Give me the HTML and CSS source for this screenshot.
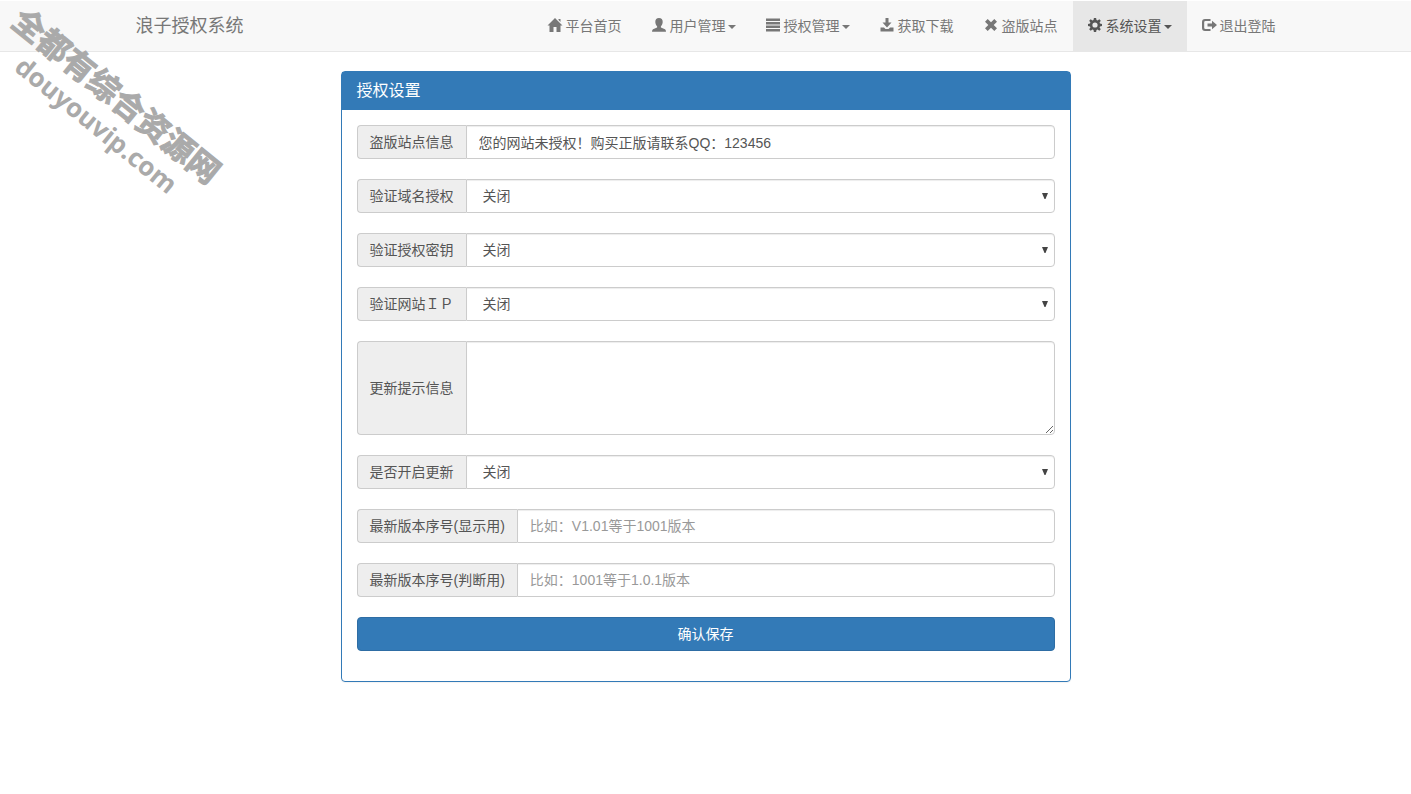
FILE: index.html
```html
<!DOCTYPE html>
<html lang="zh-CN">
<head>
<meta charset="utf-8">
<meta name="viewport" content="width=device-width, initial-scale=1">
<title>授权设置</title>
<link rel="stylesheet" href="styles.css">
</head>
<body>
<header class="navbar">
  <div class="container">
    <a class="brand" href="#">浪子授权系统</a>
    <nav class="nav">
      <a class="nav-link" href="#"><svg class="icon" viewBox="0 0 14 14"><path d="M7 0 14.500 7.500H12.500V14H8.500V9H5.500V14H1.500V7.500H-.5L7 0ZM10.500 1H12.500V4L10.500 2Z"/></svg><span>平台首页</span></a>
      <a class="nav-link" href="#"><svg class="icon" viewBox="0 0 14 14"><path d="M7 0C9.400 0 10.800 1.500 10.700 4C10.600 6 9.900 7.200 8.900 8.200V9.400L13 11.300Q14 12 14 13.700H0Q0 12 1 11.300L5.100 9.400V8.200C4.100 7.200 3.400 6 3.300 4C3.200 1.500 4.600 0 7 0Z"/></svg><span>用户管理<i class="caret"></i></span></a>
      <a class="nav-link" href="#"><svg class="icon" viewBox="0 0 14 14"><path d="M0 .5H14V3H0ZM0 4H14V6.500H0ZM0 7.500H14V10H0ZM0 11H14V13.500H0Z"/></svg><span>授权管理<i class="caret"></i></span></a>
      <a class="nav-link" href="#"><svg class="icon" viewBox="0 0 14 14"><path d="M5.500 0H8.500V4.500H11.500L7 9.500 2.500 4.500H5.500ZM.5 9.500H4L5.500 11H8.500L10 9.500H13.500V13.500H.5Z"/></svg><span>获取下载</span></a>
      <a class="nav-link" href="#"><svg class="icon" viewBox="0 0 14 14"><path d="M3.700 1 7 4.300 10.300 1 13 3.700 9.700 7 13 10.300 10.300 13 7 9.700 3.700 13 1 10.300 4.300 7 1 3.700Z"/></svg><span>盗版站点</span></a>
      <a class="nav-link active" href="#"><svg class="icon" viewBox="0 0 14 14"><path fill-rule="evenodd" d="M5.900 0H8.100L8.500 2 9.600 2.400 11.300 1.200 12.800 2.700 11.600 4.400 12 5.500 14 5.900V8.100L12 8.500 11.600 9.600 12.800 11.300 11.300 12.800 9.600 11.600 8.500 12 8.100 14H5.900L5.500 12 4.400 11.600 2.700 12.800 1.200 11.300 2.400 9.600 2 8.500 0 8.100V5.900L2 5.500 2.400 4.400 1.200 2.700 2.700 1.200 4.400 2.400 5.500 2ZM7 4.400A2.600 2.600 0 1 0 7 9.600A2.600 2.600 0 1 0 7 4.400Z"/></svg><span>系统设置<i class="caret"></i></span></a>
      <a class="nav-link" href="#"><svg class="icon" viewBox="0 0 14 14"><path d="M8.500 1H3Q0 1 0 4V10Q0 13 3 13H8.500V11H3.500Q2.200 11 2.200 9.700V4.300Q2.200 3 3.500 3H8.500ZM10 2.800 15 7 10 11.200V8.500H5.500V5.500H10Z"/></svg><span>退出登陆</span></a>
    </nav>
  </div>
</header>
<main class="container">
  <section class="panel">
    <h1 class="panel-heading">授权设置</h1>
    <form class="panel-body">
      <div class="input-group">
        <label class="addon" for="pirate">盗版站点信息</label>
        <input class="control" id="pirate" type="text" value="您的网站未授权！购买正版请联系QQ：123456">
      </div>
      <div class="input-group">
        <label class="addon" for="domain">验证域名授权</label>
        <select class="control" id="domain"><option>关闭</option><option>开启</option></select>
      </div>
      <div class="input-group">
        <label class="addon" for="key">验证授权密钥</label>
        <select class="control" id="key"><option>关闭</option><option>开启</option></select>
      </div>
      <div class="input-group">
        <label class="addon" for="ip">验证网站ＩＰ</label>
        <select class="control" id="ip"><option>关闭</option><option>开启</option></select>
      </div>
      <div class="input-group">
        <label class="addon" for="notice">更新提示信息</label>
        <textarea class="control" id="notice" rows="4"></textarea>
      </div>
      <div class="input-group">
        <label class="addon" for="update">是否开启更新</label>
        <select class="control" id="update"><option>关闭</option><option>开启</option></select>
      </div>
      <div class="input-group">
        <label class="addon" for="shown">最新版本序号(显示用)</label>
        <input class="control" id="shown" type="text" placeholder="比如：V1.01等于1001版本">
      </div>
      <div class="input-group">
        <label class="addon" for="compared">最新版本序号(判断用)</label>
        <input class="control" id="compared" type="text" placeholder="比如：1001等于1.0.1版本">
      </div>
      <button class="submit" type="submit">确认保存</button>
    </form>
  </section>
</main>
<div class="watermark"><div>全都有综合资源网</div><div class="watermark-url">douyouvip.com</div></div>
</body>
</html>
```
FILE: styles.css
```css
* { box-sizing: border-box; }

body {
  margin: 0;
  padding-top: 1px;
  background: #fff;
  color: #333;
  font: 14px/20px "Liberation Sans", "Noto Sans CJK SC", sans-serif;
}

.container {
  width: 100%;
  max-width: 1170px;
  margin: 0 auto;
  padding: 0 15px;
}

.navbar {
  margin-bottom: 19px;
  border-bottom: 1px solid #e7e7e7;
  background: #f8f8f8;
}

.navbar .container {
  display: flex;
  justify-content: space-between;
  padding-right: 0;
}

.brand {
  padding: 15px 0;
  color: #777;
  font-size: 18px;
  text-decoration: none;
}

.nav { display: flex; }

.nav-link {
  display: flex;
  gap: 4px;
  align-items: center;
  padding: 15px;
  color: #777;
  text-decoration: none;
  white-space: nowrap;
}

.nav-link.active {
  background: #e7e7e7;
  color: #555;
}

.icon {
  width: 14px;
  height: 14px;
  margin-bottom: 2px;
  fill: currentColor;
  overflow: visible;
}

.caret {
  display: inline-block;
  margin-left: 2px;
  border: 4px solid transparent;
  border-top-color: currentColor;
  border-bottom: 0;
  vertical-align: middle;
}

.panel {
  max-width: 730px;
  margin: 0 auto 20px;
  border: 1px solid #337ab7;
  border-radius: 4px;
  box-shadow: 0 1px 1px rgba(0, 0, 0, .05);
}

.panel-heading {
  margin: 0;
  padding: 10px 15px;
  background: #337ab7;
  color: #fff;
  font-size: 16px;
  font-weight: 400;
  line-height: 18px;
}

.panel-body {
  display: flex;
  flex-direction: column;
  gap: 20px;
  padding: 15px 15px 30px;
}

.input-group { display: flex; }

.addon {
  display: flex;
  align-items: center;
  padding: 0 12px;
  border: 1px solid #ccc;
  border-right: 0;
  border-radius: 4px 0 0 4px;
  background: #eee;
  color: #555;
  white-space: nowrap;
}

.control {
  flex: 1;
  min-width: 0;
  height: 34px;
  padding: 6px 12px;
  border: 1px solid #ccc;
  border-radius: 0 4px 4px 0;
  background: #fff;
  box-shadow: inset 0 1px 1px rgba(0, 0, 0, .075);
  color: #555;
  font: inherit;
}

.control::placeholder { color: #999; }

select.control {
  padding-left: 16px;
  appearance: none;
  background: #fff url("data:image/svg+xml,%3Csvg xmlns='http://www.w3.org/2000/svg' width='6' height='6'%3E%3Cpath d='M0 0H6L3.500 6H2.500Z' fill='%23444'/%3E%3C/svg%3E") no-repeat right 6px top 13px;
}

textarea.control {
  height: auto;
  resize: vertical;
}

.submit {
  height: 34px;
  border: 1px solid #2e6da4;
  border-radius: 4px;
  background: #337ab7;
  color: #fff;
  font: inherit;
}

.watermark {
  position: absolute;
  top: 2px;
  left: 28px;
  transform: rotate(39deg);
  transform-origin: 0 0;
  color: #aaa;
  font-size: 32px;
  font-weight: 700;
  line-height: 36px;
  white-space: nowrap;
  pointer-events: none;
  -webkit-text-stroke: 1px #aaa;
}

.watermark-url {
  padding-left: 31px;
  font-family: "Open Sans", sans-serif;
  font-size: 26px;
  line-height: 32px;
  -webkit-text-stroke: 0;
}
```
